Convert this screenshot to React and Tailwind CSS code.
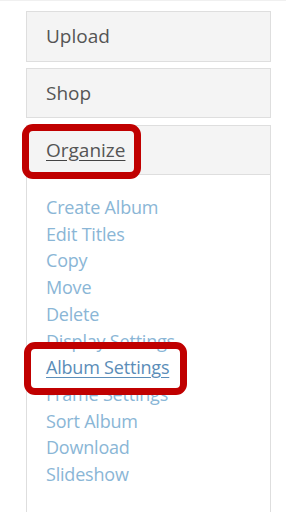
export default function App() {
  const items = [
    "Create Album",
    "Edit Titles",
    "Copy",
    "Move",
    "Delete",
    "Display Settings",
    "Album Settings",
    "Frame Settings",
    "Sort Album",
    "Download",
    "Slideshow",
  ];

  return (
    <div
      className="w-[286px] h-[512px] overflow-hidden bg-white border-t border-[#f0f0f0]"
      style={{ fontFamily: '"Open Sans", "Liberation Sans", sans-serif' }}
    >
      <div className="ml-[26px] w-[245px] pt-[10px] flex flex-col">
        <div className="h-[51px] bg-[#f4f4f4] border border-[#dedede] flex items-center pl-[19px] text-[19px] text-[#555]">
          Upload
        </div>
        <div className="mt-[6px] h-[50px] bg-[#f4f4f4] border border-[#dedede] flex items-center pl-[19px] text-[19px] text-[#555]">
          Shop
        </div>
        <div className="mt-[7px] border border-[#dedede] h-[400px]">
          <div className="relative h-[49px] bg-[#f4f4f4] border-b border-[#dedede] flex items-center pl-[19px] text-[19px] text-[#555]">
            <span className="underline decoration-[#444] underline-offset-[3px]">Organize</span>
            <div className="absolute left-[-5px] top-[-2px] w-[119px] h-[55px] border-[7px] border-[#c00000] rounded-[11px]"></div>
          </div>
          <ul className="pt-[19px] pl-[19px] text-[18px] tracking-[-0.2px] leading-[26.7px] text-[#8ab6d6]">
            {items.map((it) =>
              it === "Album Settings" ? (
                <li key={it} className="relative">
                  <span className="underline text-[#5b8db8] underline-offset-[3px]">{it}</span>
                  <div className="absolute left-[-22px] top-[-12px] w-[163px] h-[53px] border-[7px] border-[#c00000] rounded-[11px]"></div>
                </li>
              ) : (
                <li key={it}>{it}</li>
              )
            )}
          </ul>
        </div>
      </div>
    </div>
  );
}
